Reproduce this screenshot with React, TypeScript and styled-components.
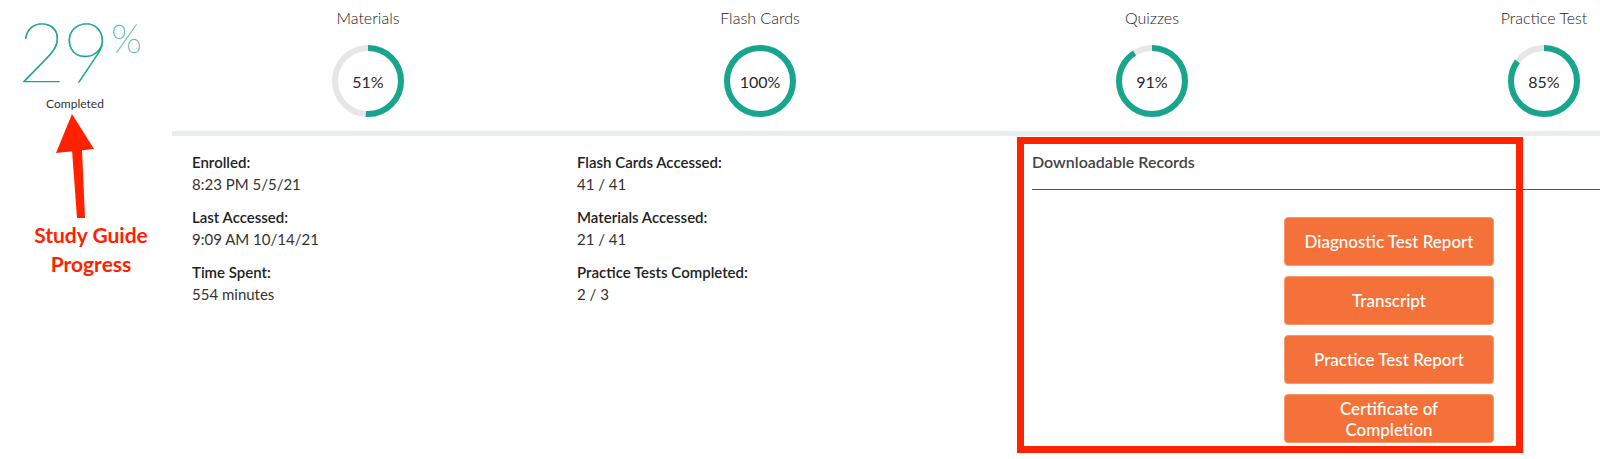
import React from "react";
import styled, { createGlobalStyle } from "styled-components";

const GlobalStyle = createGlobalStyle`
  html, body { margin: 0; padding: 0; background: #ffffff; }
  body { font-family: Lato, "Open Sans", Arial, sans-serif; color: #333; }
  * { box-sizing: border-box; }
`;

const TEAL = "#17a68d";
const TRACK = "#e6e6e6";
const ORANGE = "#f47239";
const RED = "#ff2200";

const Page = styled.div`
  display: flex;
  width: 1600px;
  height: 459px;
  overflow: hidden;
`;

const Summary = styled.aside`
  width: 172px;
  flex: none;
  display: flex;
  flex-direction: column;
`;

const BigFigure = styled.div`
  display: flex;
  align-items: flex-start;
  padding-left: 18px;
  margin-top: 15px;
  height: 72px;
  color: ${TEAL};
`;

const BigNumber = styled.span`
  font-size: 82px;
  line-height: 70px;
  font-weight: 100;
  letter-spacing: -3px;
  -webkit-text-stroke: 0.6px ${TEAL};
`;

const Percent = styled.span`
  font-size: 40px;
  line-height: 34px;
  font-weight: 100;
  color: #4dbba8;
  margin-left: 4px;
  margin-top: 6px;
  -webkit-text-stroke: 0.4px #4dbba8;
`;

const Caption = styled.div`
  width: 150px;
  text-align: center;
  font-size: 12px;
  line-height: 16px;
  color: #333;
  margin-top: 9px;
`;

const ArrowMark = styled.svg`
  display: block;
  margin-left: 45px;
  margin-top: 2px;
`;

const Annotation = styled.div`
  padding-left: 10px;
  text-align: center;
  color: ${RED};
  font-size: 21px;
  line-height: 29px;
  font-weight: 700;
`;

const Main = styled.main`
  flex: 1;
  min-width: 0;
  display: flex;
  flex-direction: column;
`;

const GaugeRow = styled.div`
  display: grid;
  grid-template-columns: repeat(4, 392px);
  padding-top: 7px;
  height: 131px;
`;

const Gauge = styled.div`
  display: flex;
  flex-direction: column;
  align-items: center;
`;

const GaugeTitle = styled.div`
  font-size: 16px;
  line-height: 22px;
  font-weight: 300;
  color: #222;
  white-space: nowrap;
`;

const Ring = styled.div`
  position: relative;
  width: 72px;
  height: 72px;
  margin-top: 16px;
`;

const RingLabel = styled.span`
  position: absolute;
  inset: 0;
  display: flex;
  align-items: center;
  justify-content: center;
  font-size: 16px;
  font-weight: 400;
  color: #2a2a2a;
`;

const Divider = styled.div`
  height: 5px;
  background: #e9ecef;
  flex: none;
`;

const Details = styled.section`
  position: relative;
  display: grid;
  grid-template-columns: 385px 455px 1fr;
  padding-left: 20px;
  padding-top: 15px;
  flex: 1;
`;

const StatColumn = styled.div`
  display: flex;
  flex-direction: column;
  gap: 11px;
`;

const Stat = styled.div`
  display: flex;
  flex-direction: column;
`;

const StatLabel = styled.div`
  font-size: 15px;
  line-height: 22px;
  font-weight: 600;
  color: #222;
`;

const StatValue = styled.div`
  font-size: 15px;
  line-height: 22px;
  font-weight: 400;
  color: #333;
`;

const Records = styled.div`
  display: flex;
  flex-direction: column;
`;

const RecordsTitle = styled.h3`
  margin: 0;
  font-size: 16px;
  line-height: 22px;
  font-weight: 600;
  color: #444;
  padding-bottom: 16px;
  border-bottom: 1px solid #555;
`;

const ButtonStack = styled.div`
  display: flex;
  flex-direction: column;
  gap: 10px;
  margin-top: 27px;
  padding-left: 252px;
`;

const RecordButton = styled.button`
  width: 210px;
  height: 49px;
  border: 1px solid #f79a6e;
  border-radius: 4px;
  background: ${ORANGE};
  color: #ffffff;
  font-family: Lato, "Open Sans", Arial, sans-serif;
  font-size: 17px;
  line-height: 21px;
  font-weight: 500;
  padding: 0 16px;
  cursor: pointer;
`;

const Highlight = styled.div`
  position: absolute;
  left: 845px;
  top: 1px;
  width: 506px;
  height: 316px;
  border: 7px solid ${RED};
  pointer-events: none;
`;

function ProgressRing({ value }: { value: number }) {
  const r = 33;
  const c = 2 * Math.PI * r;
  return (
    <Ring>
      <svg width="72" height="72" viewBox="0 0 72 72">
        <circle cx="36" cy="36" r={r} fill="none" stroke={TRACK} strokeWidth="6" />
        <circle
          cx="36"
          cy="36"
          r={r}
          fill="none"
          stroke={TEAL}
          strokeWidth="6"
          strokeDasharray={`${(c * value) / 100} ${c}`}
          transform="rotate(-90 36 36)"
        />
      </svg>
      <RingLabel>{value}%</RingLabel>
    </Ring>
  );
}

const gauges = [
  { title: "Materials", value: 51 },
  { title: "Flash Cards", value: 100 },
  { title: "Quizzes", value: 91 },
  { title: "Practice Test", value: 85 },
];

const leftStats = [
  { label: "Enrolled:", value: "8:23 PM 5/5/21" },
  { label: "Last Accessed:", value: "9:09 AM 10/14/21" },
  { label: "Time Spent:", value: "554 minutes" },
];

const rightStats = [
  { label: "Flash Cards Accessed:", value: "41 / 41" },
  { label: "Materials Accessed:", value: "21 / 41" },
  { label: "Practice Tests Completed:", value: "2 / 3" },
];

const records = [
  "Diagnostic Test Report",
  "Transcript",
  "Practice Test Report",
  "Certificate of Completion",
];

export default function App() {
  return (
    <>
      <GlobalStyle />
      <Page>
        <Summary>
          <BigFigure>
            <BigNumber>29</BigNumber>
            <Percent>%</Percent>
          </BigFigure>
          <Caption>Completed</Caption>
          <ArrowMark width="60" height="106" viewBox="0 0 60 106">
            <polygon points="27,0 11,39 49,35" fill={RED} />
            <polygon points="27,36 37,36 40,104 32,104" fill={RED} />
          </ArrowMark>
          <Annotation>
            Study Guide
            <br />
            Progress
          </Annotation>
        </Summary>
        <Main>
          <GaugeRow>
            {gauges.map((g) => (
              <Gauge key={g.title}>
                <GaugeTitle>{g.title}</GaugeTitle>
                <ProgressRing value={g.value} />
              </Gauge>
            ))}
          </GaugeRow>
          <Divider />
          <Details>
            <StatColumn>
              {leftStats.map((s) => (
                <Stat key={s.label}>
                  <StatLabel>{s.label}</StatLabel>
                  <StatValue>{s.value}</StatValue>
                </Stat>
              ))}
            </StatColumn>
            <StatColumn>
              {rightStats.map((s) => (
                <Stat key={s.label}>
                  <StatLabel>{s.label}</StatLabel>
                  <StatValue>{s.value}</StatValue>
                </Stat>
              ))}
            </StatColumn>
            <Records>
              <RecordsTitle>Downloadable Records</RecordsTitle>
              <ButtonStack>
                {records.map((r) => (
                  <RecordButton key={r}>{r}</RecordButton>
                ))}
              </ButtonStack>
            </Records>
            <Highlight />
          </Details>
        </Main>
      </Page>
    </>
  );
}
